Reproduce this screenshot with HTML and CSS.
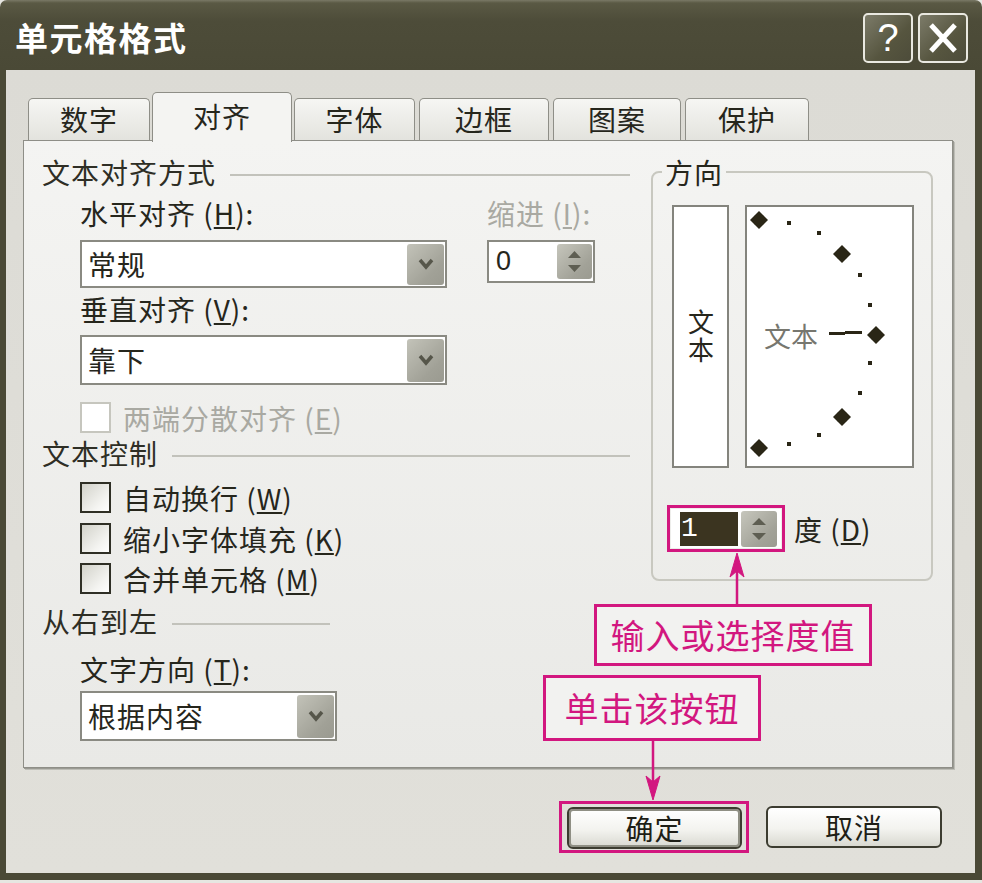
FILE: index.html
```html
<!DOCTYPE html>
<html lang="zh-CN">
<head>
<meta charset="utf-8">
<title>单元格格式</title>
<link rel="stylesheet" href="styles.css">
</head>
<body>
<div class="window">
  <div class="titlebar">
    <h1 class="title">单元格格式</h1>
    <div class="title-btns">
      <span class="tbtn help">?</span>
      <span class="tbtn close"><svg viewBox="0 0 46 46" width="46" height="46"><path d="M11 10 L35 36 M35 10 L11 36" stroke="#fff" stroke-width="5"/></svg></span>
    </div>
  </div>
  <div class="client">
    <div class="tabs">
      <div class="tab">数字</div>
      <div class="tab active">对齐</div>
      <div class="tab">字体</div>
      <div class="tab">边框</div>
      <div class="tab">图案</div>
      <div class="tab">保护</div>
    </div>
    <div class="panel">
      <div class="left">
        <div class="group-head"><span>文本对齐方式</span><i class="rule"></i></div>
        <div class="align-grid">
          <div class="lbl">水平对齐 (<u>H</u>):</div>
          <div class="lbl disabled">缩进 (<u>I</u>):</div>
          <div class="combo wide"><span>常规</span><span class="drop"><svg width="16" height="12" viewBox="0 0 16 12"><path d="M2 2 L8 9 L14 2" fill="none" stroke="#56564a" stroke-width="3.5"/></svg></span></div>
          <div class="spin indent"><span class="num">0</span><span class="spinbtn"><svg width="35" height="35" viewBox="0 0 35 35"><path d="M17.5 7 L24 14 L11 14 Z M11 21 L24 21 L17.5 28 Z" fill="#5e5e52"/></svg></span></div>
        </div>
        <div class="lbl sub vlabel">垂直对齐 (<u>V</u>):</div>
        <div class="combo wide sub c2"><span>靠下</span><span class="drop"><svg width="16" height="12" viewBox="0 0 16 12"><path d="M2 2 L8 9 L14 2" fill="none" stroke="#56564a" stroke-width="3.5"/></svg></span></div>
        <div class="check disabled justify"><span class="box"></span><span>两端分散对齐 (<u>E</u>)</span></div>

        <div class="group-head ctl"><span>文本控制</span><i class="rule"></i></div>
        <div class="check cb1"><span class="box"></span><span>自动换行 (<u>W</u>)</span></div>
        <div class="check cb2"><span class="box"></span><span>缩小字体填充 (<u>K</u>)</span></div>
        <div class="check cb3"><span class="box"></span><span>合并单元格 (<u>M</u>)</span></div>

        <div class="group-head rtl"><span>从右到左</span><i class="rule short"></i></div>
        <div class="lbl sub dirlabel">文字方向 (<u>T</u>):</div>
        <div class="combo narrow sub c3"><span>根据内容</span><span class="drop"><svg width="16" height="12" viewBox="0 0 16 12"><path d="M2 2 L8 9 L14 2" fill="none" stroke="#56564a" stroke-width="3.5"/></svg></span></div>
      </div>

      <fieldset class="dir">
        <legend>方向</legend>
        <div class="dir-row">
          <div class="vbox"><span class="vtext">文本</span></div>
          <div class="arc">
            <svg width="165" height="259" viewBox="0 0 165 259">
              <g fill="#2a2616">
                <path d="M12 4 L21 13 L12 22 L3 13 Z"/>
                <path d="M95 38 L104 47 L95 56 L86 47 Z"/>
                <path d="M129 119 L138 128 L129 137 L120 128 Z"/>
                <path d="M95 201 L104 210 L95 219 L86 210 Z"/>
                <path d="M12 232 L21 241 L12 250 L3 241 Z"/>
                <circle cx="12" cy="13" r="6"/>
                <circle cx="95" cy="47" r="6"/>
                <circle cx="129" cy="128" r="6"/>
                <circle cx="95" cy="210" r="6"/>
                <circle cx="12" cy="241" r="6"/>
                <rect x="40" y="14" width="4" height="4"/>
                <rect x="70" y="24" width="4" height="4"/>
                <rect x="111" y="66" width="4" height="4"/>
                <rect x="121" y="96" width="4" height="4"/>
                <rect x="121" y="154" width="4" height="4"/>
                <rect x="111" y="184" width="4" height="4"/>
                <rect x="70" y="226" width="4" height="4"/>
                <rect x="40" y="235" width="4" height="4"/>
                <rect x="82" y="125" width="16" height="3"/>
                <rect x="98" y="124" width="17" height="3"/>
              </g>
              <text x="17" y="140" class="arc-text">文本</text>
            </svg>
          </div>
        </div>
        <div class="deg-row">
          <span class="ring deg-ring"><span class="spin deg"><span class="sel">1</span><span class="spinbtn"><svg width="36" height="36" viewBox="0 0 36 36"><path d="M18 7 L25 14 L11 14 Z M11 22 L25 22 L18 29 Z" fill="#5e5e52"/></svg></span></span></span>
          <span class="lbl">度 (<u>D</u>)</span>
        </div>
      </fieldset>
    </div>
    <div class="buttons">
      <span class="ring ok-ring"><button class="btn default">确定</button></span>
      <button class="btn">取消</button>
    </div>
  </div>

  <svg class="annot" width="982" height="883" viewBox="0 0 982 883">
    <g stroke="#d2177f" stroke-width="2.5" fill="#d2177f">
      <line x1="737" y1="604" x2="737" y2="566"/>
      <path d="M737 553 L744 577 L737 571 L730 577 Z" stroke-width="1"/>
      <line x1="653" y1="741" x2="653" y2="786"/>
      <path d="M653 800 L660 776 L653 782 L646 776 Z" stroke-width="1"/>
    </g>
  </svg>
  <div class="callout co1">输入或选择度值</div>
  <div class="callout co2">单击该按钮</div>
</div>
</body>
</html>
```

FILE: styles.css
```css
html, body {
  margin: 0;
  padding: 0;
}
body {
  background: #e6e6e1;
  font-family: "Noto Sans CJK SC", "Noto Sans", sans-serif;
  color: #26261c;
}
.window {
  position: relative;
  width: 982px;
  height: 880px;
  display: flex;
  flex-direction: column;
}

/* title bar */
.titlebar {
  flex: none;
  height: 70px;
  box-sizing: border-box;
  display: flex;
  justify-content: space-between;
  align-items: flex-start;
  padding: 0 14px 0 15px;
  background: linear-gradient(#7a7966 0, #5a5944 3px, #4d4c39 30%, #4a4936 100%);
  border-radius: 7px 7px 0 0;
}
.title {
  margin: 17px 0 0;
  font-size: 33px;
  line-height: 40px;
  font-weight: 700;
  color: #fff;
  letter-spacing: 1.5px;
}
.title-btns {
  display: flex;
  gap: 5px;
  margin-top: 13px;
}
.tbtn {
  width: 50px;
  height: 50px;
  box-sizing: border-box;
  border: 2px solid #e9e8e0;
  border-radius: 5px;
  background: linear-gradient(135deg, #7c7b69, #56553f 60%, #4d4c3a);
  display: flex;
  align-items: center;
  justify-content: center;
  color: #fff;
}
.tbtn.help {
  font-family: "Liberation Sans", sans-serif;
  font-size: 38px;
  line-height: 46px;
}
.tbtn svg { display: block; }

/* client area */
.client {
  flex: 1;
  display: flex;
  flex-direction: column;
  background: linear-gradient(#dcdbd5, #e1e0da);
  border-style: solid;
  border-color: #4a4936;
  border-width: 0 7px 7px 6px;
}

/* tabs */
.tabs {
  position: relative;
  z-index: 1;
  display: flex;
  align-items: flex-end;
  gap: 4px;
  height: 50px;
  margin: 22px 0 -2px 22px;
}
.tab {
  width: 122px;
  height: 42px;
  margin-bottom: 2px;
  box-sizing: border-box;
  border: 1px solid #8e8e87;
  border-bottom: none;
  border-radius: 5px 5px 0 0;
  background: linear-gradient(#f6f6f3, #e3e3de);
  font-size: 28px;
  line-height: 40px;
  text-align: center;
  letter-spacing: 1px;
}
.tab:nth-child(3) { width: 121px; }
.tab:nth-child(4) { width: 130px; }
.tab:nth-child(5) { width: 128px; }
.tab:nth-child(6) { width: 124px; }
.tab.active {
  width: 140px;
  height: 50px;
  margin: 0 -2px;
  background: #f4f4f2;
  line-height: 46px;
}

/* panel */
.panel {
  margin-left: 17px;
  width: 930px;
  height: 628px;
  box-sizing: border-box;
  border: 1px solid #8e8e87;
  background: linear-gradient(#f4f4f2, #e9e9e6);
  box-shadow: 1px 1px 0 #9a9a93, 2px 2px 0 #bdbdb6;
  display: grid;
  grid-template-columns: 588px 282px;
  column-gap: 21px;
  align-items: start;
  padding: 16px 0 0 18px;
}

.group-head {
  display: flex;
  align-items: center;
  height: 30px;
  font-size: 28px;
  line-height: 30px;
  letter-spacing: 1px;
  color: #2e2e25;
}
.rule {
  flex: 1;
  height: 0;
  margin: 6px 0 0 14px;
  border-top: 2px solid #c2c2bb;
}
.rule.short {
  flex: none;
  width: 158px;
}
.group-head.ctl { margin-top: 5px; }
.group-head.rtl { margin-top: 12px; }

.lbl {
  font-size: 28px;
  line-height: 30px;
  letter-spacing: 1px;
  white-space: nowrap;
}
.lbl.disabled { color: #a9a9a2; }
.sub { margin-left: 38px; }
.vlabel { margin-top: 6px; }
.dirlabel { margin-top: 18px; }

.align-grid {
  display: grid;
  grid-template-columns: 367px 108px;
  column-gap: 40px;
  row-gap: 12px;
  align-items: start;
  margin: 11px 0 0 38px;
}

.combo {
  box-sizing: border-box;
  height: 48px;
  border: 2px solid #8a8a82;
  background: #fff;
  display: flex;
  align-items: center;
  justify-content: space-between;
  padding: 0 1px 0 6px;
  font-size: 28px;
  letter-spacing: 1px;
}
.combo.wide { width: 367px; }
.combo.narrow { width: 257px; }
.combo.c2 { margin-top: 11px; height: 50px; }
.combo.c3 { margin-top: 7px; height: 50px; }
.drop {
  width: 37px;
  height: 41px;
  border-radius: 3px;
  background: linear-gradient(135deg, #c3c3b9, #a1a197 70%, #9a9a90);
  display: flex;
  align-items: center;
  justify-content: center;
}
.c2 .drop, .c3 .drop { height: 43px; }

.spin {
  box-sizing: border-box;
  display: flex;
  align-items: center;
  justify-content: space-between;
  background: #fff;
}
.spin.indent {
  height: 43px;
  border: 2px solid #8a8a82;
  padding: 0 1px 0 7px;
}
.num {
  font-family: "Liberation Sans", sans-serif;
  font-size: 27px;
}
.spinbtn {
  display: block;
  border-radius: 3px;
  background: linear-gradient(135deg, #c6c6bc, #a2a298 70%, #9b9b91);
}
.spinbtn svg { display: block; }

.check {
  display: flex;
  align-items: center;
  gap: 12px;
  height: 31px;
  margin-left: 38px;
  font-size: 28px;
  line-height: 30px;
  letter-spacing: 1px;
  white-space: nowrap;
}
.box {
  width: 31px;
  height: 31px;
  box-sizing: border-box;
  border: 2px solid #2f2f25;
  background: linear-gradient(135deg, #d2d2ca, #f4f4f1 70%, #fff);
}
.check.disabled { color: #a9a9a2; }
.check.disabled .box {
  border-color: #c6c6be;
  background: #fff;
}
.justify { margin-top: 17px; }
.cb1 { margin-top: 14px; }
.cb2 { margin-top: 10px; }
.cb3 { margin-top: 9px; }

/* direction group */
.dir {
  margin: 0;
  min-width: 0;
  padding: 18px 0 27px 19px;
  border: 2px solid #c8c8c0;
  border-radius: 8px;
}
.dir legend {
  margin-left: -10px;
  padding: 0 3px;
  font-size: 28px;
  line-height: 30px;
  letter-spacing: 1px;
}
.dir-row {
  display: flex;
  gap: 16px;
}
.vbox {
  width: 57px;
  height: 263px;
  box-sizing: border-box;
  border: 2px solid #84847d;
  background: #fff;
  display: flex;
  align-items: center;
  justify-content: center;
}
.vtext {
  writing-mode: vertical-rl;
  font-size: 26px;
  line-height: 30px;
  letter-spacing: 2px;
}
.arc {
  width: 169px;
  height: 263px;
  box-sizing: border-box;
  border: 2px solid #84847d;
  background: #fff;
}
.arc svg { display: block; }
.arc-text {
  font-family: "Noto Sans CJK SC", sans-serif;
  font-size: 27px;
  fill: #77776f;
}
.deg-row {
  display: flex;
  align-items: center;
  gap: 9px;
  margin: 37px 0 0 -5px;
}
.ring {
  display: block;
  border: 3px solid #d2177f;
}
.deg-ring {
  padding: 1px;
}
.spin.deg {
  width: 110px;
  height: 39px;
  padding: 2px 4px 1px 9px;
}
.sel {
  width: 58px;
  height: 34px;
  background: #3b3420;
  color: #fff;
  font-family: "Liberation Mono", monospace;
  font-size: 28px;
  line-height: 34px;
  padding-left: 1px;
  box-sizing: border-box;
}

/* buttons */
.buttons {
  display: flex;
  justify-content: flex-end;
  align-items: center;
  gap: 24px;
  margin-top: 33px;
  padding-right: 33px;
}
.ok-ring {
  padding: 3px 4px 1px 5px;
  margin-right: -7px;
}
.btn {
  display: block;
  width: 176px;
  height: 42px;
  box-sizing: border-box;
  padding: 0;
  border: 2px solid #3c3c30;
  border-radius: 6px;
  background: linear-gradient(#ffffff, #f3f3ef 55%, #d9d9d1);
  font-family: inherit;
  font-size: 28px;
  line-height: 36px;
  letter-spacing: 1px;
  color: #1e1e16;
}
.btn.default {
  width: 175px;
  box-shadow: inset 0 0 0 2px #8f8f84;
}

/* annotations */
.annot {
  position: absolute;
  left: 0;
  top: 0;
  pointer-events: none;
}
.callout {
  position: absolute;
  box-sizing: border-box;
  border: 3px solid #d2177f;
  background: #f2f2f0;
  color: #d2177f;
  font-size: 34px;
  line-height: 40px;
  letter-spacing: 1px;
  display: flex;
  align-items: center;
  justify-content: center;
}
.co1 {
  left: 594px;
  top: 604px;
  width: 278px;
  height: 62px;
}
.co2 {
  left: 543px;
  top: 675px;
  width: 218px;
  height: 66px;
}
```
